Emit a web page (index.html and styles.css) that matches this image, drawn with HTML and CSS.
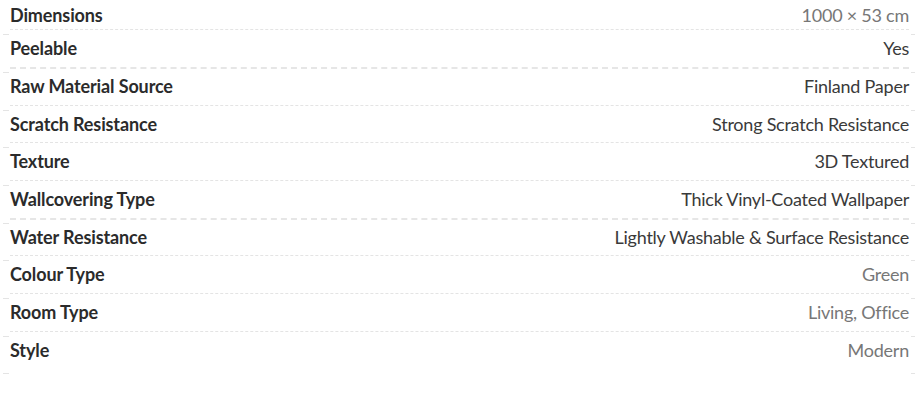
FILE: index.html
```html
<!DOCTYPE html>
<html>
<head>
<meta charset="utf-8">
<link rel="stylesheet" href="styles.css">
</head>
<body>
<div class="specs">
  <div class="row first"><div class="cell"><span class="label">Dimensions</span><span class="value muted">1000 × 53 cm</span></div></div>
  <div class="row thick"><div class="cell"><span class="label">Peelable</span><span class="value">Yes</span></div></div>
  <div class="row"><div class="cell"><span class="label">Raw Material Source</span><span class="value">Finland Paper</span></div></div>
  <div class="row"><div class="cell"><span class="label">Scratch Resistance</span><span class="value">Strong Scratch Resistance</span></div></div>
  <div class="row"><div class="cell"><span class="label">Texture</span><span class="value">3D Textured</span></div></div>
  <div class="row thick"><div class="cell"><span class="label">Wallcovering Type</span><span class="value">Thick Vinyl-Coated Wallpaper</span></div></div>
  <div class="row"><div class="cell"><span class="label">Water Resistance</span><span class="value">Lightly Washable &amp; Surface Resistance</span></div></div>
  <div class="row"><div class="cell"><span class="label">Colour Type</span><span class="value muted">Green</span></div></div>
  <div class="row"><div class="cell"><span class="label">Room Type</span><span class="value muted">Living, Office</span></div></div>
  <div class="row last"><div class="cell"><span class="label">Style</span><span class="value muted">Modern</span></div></div>
</div>
</body>
</html>
```
FILE: styles.css
```css
html, body {
  margin: 0;
  padding: 0;
  background: #fff;
}
body {
  font-family: Lato, "Open Sans", sans-serif;
  font-size: 18px;
  color: #333;
}
.specs {
  width: 912px;
  margin-left: 3px;
  display: flex;
  flex-direction: column;
}
.row {
  display: flex;
  align-items: stretch;
}
.row::before,
.row::after {
  content: "";
  flex: none;
  border-bottom: 1px dashed #e4e4e4;
}
.row::before {
  width: 6px;
  margin-right: 1px;
}
.row::after {
  width: 4px;
  margin-left: 2px;
}
.cell {
  flex: 1;
  display: flex;
  justify-content: space-between;
  align-items: center;
  padding: 2px 0 7.7px;
  line-height: 22px;
  letter-spacing: -0.24px;
  border-bottom: 1px dashed #e4e4e4;
  margin-bottom: 5px;
}
.row.first .cell {
  padding-top: 3.7px;
  padding-bottom: 3.6px;
}
.row.thick .cell {
  border-bottom-width: 2px;
  margin-bottom: 4px;
  border-bottom-color: #e6e6e6;
}
.row.last .cell {
  border-bottom-color: transparent;
}
.label {
  font-weight: 700;
  color: #2b2b2b;
  letter-spacing: -0.12px;
}
.value {
  color: #3a3a3a;
  text-align: right;
}
.value.muted {
  color: #777;
}
```
